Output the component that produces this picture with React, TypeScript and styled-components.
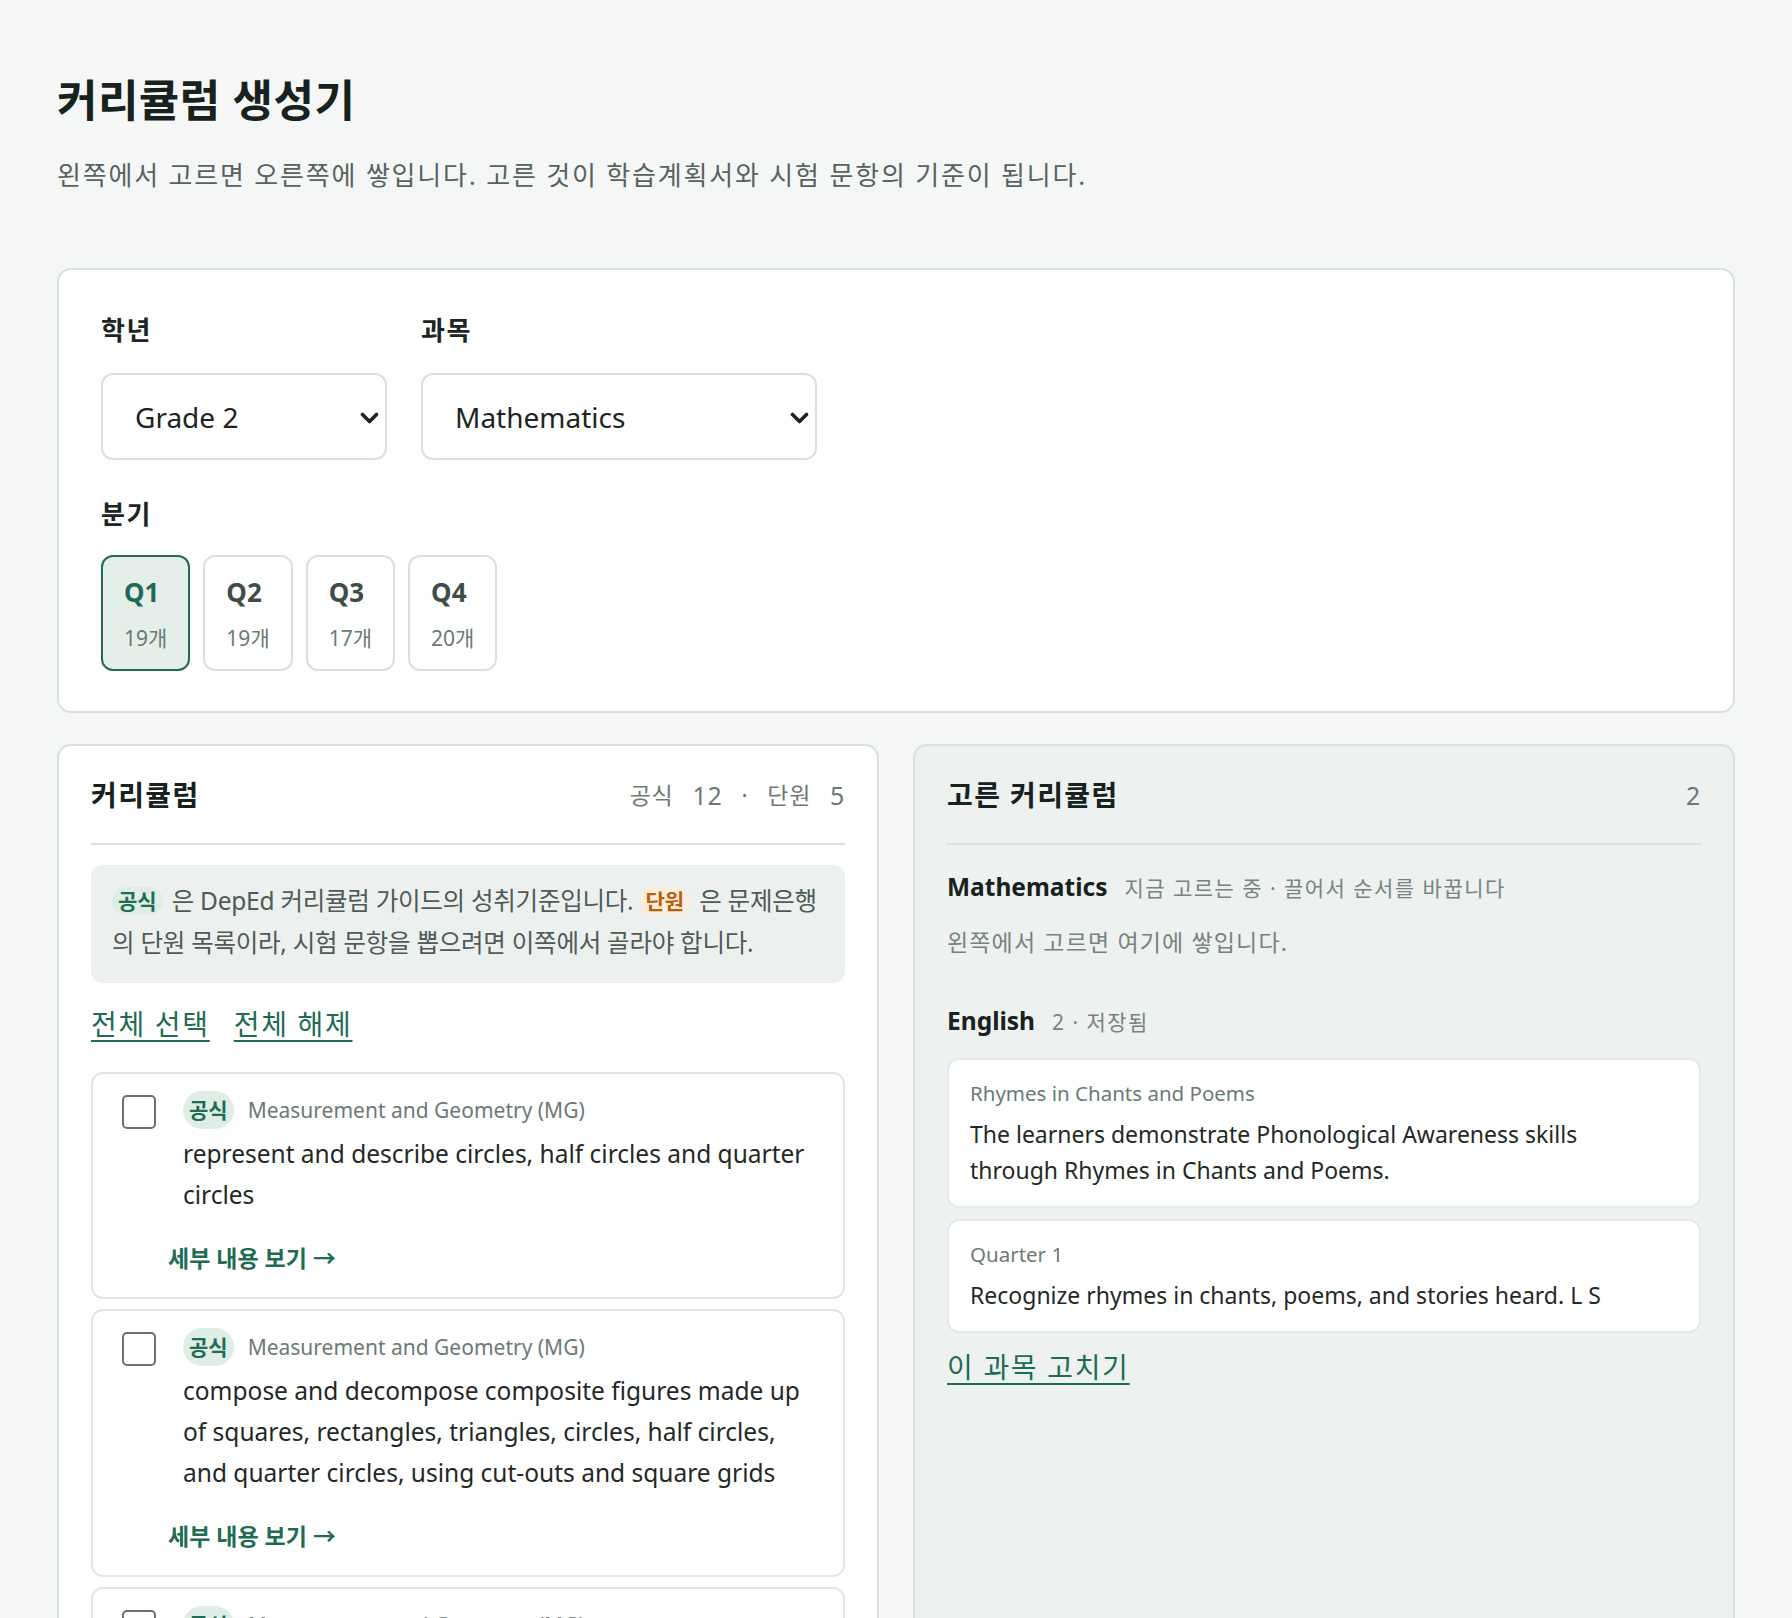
import styled, { createGlobalStyle } from "styled-components";

const GlobalStyle = createGlobalStyle`
    body {
        margin: 0;
        background: #f5f7f6;
        font-family: "Noto Sans", "Noto Sans CJK KR", sans-serif;
        color: #1b2521;
    }
    * {
        box-sizing: border-box;
    }
`

const Page = styled.main`
    padding: 74px 57px 0;
`

const Title = styled.h1`
    margin: 0;
    font-size: 44px;
    line-height: 52px;
    font-weight: 700;
    letter-spacing: 0.01em;
    color: #17211d;
`

const Subtitle = styled.p`
    margin: 30px 0 0;
    font-size: 26px;
    line-height: 39px;
    letter-spacing: 0.07em;
    color: #56635e;
`

const Panel = styled.section`
    margin-top: 73px;
    background: #fff;
    border: 2px solid #d8e1dd;
    border-radius: 14px;
    padding: 43px 42px 40px;
`

const FieldRow = styled.div`
    display: flex;
    gap: 34px;
`

const Field = styled.div`
    display: flex;
    flex-direction: column;
    gap: 26px;
`

const Label = styled.div`
    font-size: 26px;
    line-height: 34px;
    font-weight: 600;
    letter-spacing: 0.06em;
    color: #1b2521;
`

const SelectWrap = styled.div<{ $width: number }>`
    position: relative;
    width: ${p => p.$width}px;
`

const Select = styled.select`
    appearance: none;
    width: 100%;
    height: 87px;
    padding: 0 50px 0 32px;
    border: 2px solid #d8e1dd;
    border-radius: 12px;
    background: #fff;
    font-family: inherit;
    font-size: 28px;
    color: #1b2521;
    outline: none;
`

const Chevron = styled.svg`
    position: absolute;
    right: 8px;
    top: 50%;
    width: 19px;
    height: 12px;
    margin-top: -5px;
    pointer-events: none;
`

const QuarterBlock = styled.div`
    margin-top: 37px;
    display: flex;
    flex-direction: column;
    gap: 24px;
`

const QuarterRow = styled.div`
    display: flex;
    gap: 13px;
`

const QuarterButton = styled.button<{ $active?: boolean }>`
    display: flex;
    flex-direction: column;
    align-items: flex-start;
    gap: 16px;
    padding: 19px 21px 17px;
    border: 2px solid ${p => (p.$active ? "#216b55" : "#d8e1dd")};
    border-radius: 12px;
    background: ${p => (p.$active ? "#e4efea" : "#fff")};
    font-family: inherit;
    cursor: pointer;
`

const QuarterName = styled.span<{ $active?: boolean }>`
    font-size: 26px;
    line-height: 32px;
    font-weight: 700;
    color: ${p => (p.$active ? "#1f6b55" : "#3f4d48")};
`

const QuarterCount = styled.span`
    font-size: 21px;
    line-height: 28px;
    color: #6b7a75;
`

const Columns = styled.div`
    margin-top: 31px;
    display: grid;
    grid-template-columns: 1fr 1fr;
    gap: 34px;
    align-items: stretch;
`

const Column = styled.section<{ $tinted?: boolean }>`
    background: ${p => (p.$tinted ? "#edf1f0" : "#fff")};
    border: 2px solid #d8e1dd;
    border-radius: 14px;
    padding: 31px 32px 40px;
`

const ColumnHeader = styled.div`
    display: flex;
    justify-content: space-between;
    align-items: center;
    padding-bottom: 30px;
    border-bottom: 2px solid #dbe3df;
`

const ColumnTitle = styled.h2`
    margin: 0;
    font-size: 28px;
    line-height: 36px;
    font-weight: 700;
    letter-spacing: 0.05em;
    color: #17211d;
`

const Meta = styled.div`
    display: flex;
    align-items: center;
    gap: 19px;
    font-size: 23px;
    line-height: 34px;
    letter-spacing: 0.03em;
    color: #6b7a75;
`

const Number = styled.span`
    font-size: 25px;
`

const InfoBox = styled.div`
    margin-top: 20px;
    background: #ecf1ef;
    border-radius: 12px;
    padding: 15px 21px 19px;
    font-size: 24.5px;
    line-height: 42px;
    letter-spacing: -0.01em;
    color: #4e5b56;
`

const Chip = styled.span<{ $tone?: "green" | "orange" }>`
    display: inline-block;
    padding: 6px 6px;
    border-radius: 19px;
    font-size: 21px;
    line-height: 26px;
    font-weight: 700;
    letter-spacing: 0;
    vertical-align: middle;
    background: ${p => (p.$tone === "orange" ? "#fcecdc" : "#deede6")};
    color: ${p => (p.$tone === "orange" ? "#b7600f" : "#1f6b55")};
`

const InlineChip = styled(Chip)`
    padding: 1px 6px;
    margin-right: 9px;
    position: relative;
    top: -2px;
`

const LinkRow = styled.div`
    margin-top: 22px;
    display: flex;
    gap: 24px;
`

const TextLink = styled.a`
    font-size: 28px;
    line-height: 39px;
    letter-spacing: 0.06em;
    color: #1f6b55;
    text-decoration: underline;
    text-underline-offset: 5px;
    text-decoration-thickness: 2px;
    cursor: pointer;
`

const ItemList = styled.div`
    margin-top: 28px;
    display: flex;
    flex-direction: column;
    gap: 10px;
`

const ItemCard = styled.div`
    display: grid;
    grid-template-columns: 34px 1fr;
    column-gap: 27px;
    padding: 17px 28px 23px 29px;
    border: 2px solid #e0e7e4;
    border-radius: 12px;
    background: #fff;
`

const Checkbox = styled.input`
    appearance: none;
    width: 34px;
    height: 34px;
    margin: 4px 0 0;
    border: 2px solid #6f6f6f;
    border-radius: 5px;
    background: #fff;
`

const ItemBody = styled.div`
    display: flex;
    flex-direction: column;
    align-items: flex-start;
`

const ItemHead = styled.div`
    display: flex;
    align-items: center;
    gap: 14px;
    height: 38px;
`

const Category = styled.span`
    font-size: 21px;
    line-height: 29px;
    color: #6b7a75;
`

const ItemText = styled.p`
    margin: 4px 0 0;
    font-size: 24.5px;
    line-height: 41px;
    color: #1f2925;
`

const DetailLink = styled.a`
    margin: 27px 0 0 -15px;
    font-size: 23px;
    line-height: 32px;
    font-weight: 600;
    color: #1f6b55;
    text-decoration: none;
    cursor: pointer;
`

const SubjectLine = styled.div<{ $gap: number }>`
    margin-top: ${p => p.$gap}px;
    display: flex;
    align-items: baseline;
    gap: 17px;
`

const SubjectName = styled.span`
    font-size: 24.5px;
    line-height: 34px;
    font-weight: 700;
    color: #17211d;
`

const SubjectNote = styled.span`
    font-size: 21px;
    line-height: 34px;
    letter-spacing: 0.07em;
    color: #76847f;
`

const Hint = styled.p`
    margin: 20px 0 0;
    font-size: 23px;
    line-height: 34px;
    letter-spacing: 0.05em;
    color: #76847f;
`

const SavedList = styled.div`
    margin-top: 19px;
    display: flex;
    flex-direction: column;
    gap: 11px;
`

const SavedCard = styled.div`
    background: #fff;
    border: 2px solid #e4eae7;
    border-radius: 12px;
    padding: 19px 40px 18px 21px;
`

const SavedLabel = styled.div`
    font-size: 20.5px;
    line-height: 29px;
    color: #6b7a75;
`

const SavedText = styled.div`
    margin-top: 8px;
    font-size: 23px;
    line-height: 36px;
    color: #1f2925;
`

const EditLink = styled(TextLink)`
    display: inline-block;
    margin-top: 15px;
`

const ChevronIcon = () => (
    <Chevron viewBox="0 0 19 12">
        <path d="M2.5 2.5 L9.5 9.5 L16.5 2.5" fill="none" stroke="#1b2521" strokeWidth="3.6" strokeLinecap="round" strokeLinejoin="round" />
    </Chevron>
)

const quarters = [
    { name: "Q1", count: 19 },
    { name: "Q2", count: 19 },
    { name: "Q3", count: 17 },
    { name: "Q4", count: 20 },
]

const items = [
    "represent and describe circles, half circles and quarter circles",
    "compose and decompose composite figures made up of squares, rectangles, triangles, circles, half circles, and quarter circles, using cut-outs and square grids",
    "identify and draw lines of symmetry in shapes and figures",
]

const saved = [
    { label: "Rhymes in Chants and Poems", text: "The learners demonstrate Phonological Awareness skills through Rhymes in Chants and Poems." },
    { label: "Quarter 1", text: "Recognize rhymes in chants, poems, and stories heard. L S" },
]

const App = () => {
    return (
        <>
            <GlobalStyle />
            <Page>
                <Title>커리큘럼 생성기</Title>
                <Subtitle>왼쪽에서 고르면 오른쪽에 쌓입니다. 고른 것이 학습계획서와 시험 문항의 기준이 됩니다.</Subtitle>

                <Panel>
                    <FieldRow>
                        <Field>
                            <Label>학년</Label>
                            <SelectWrap $width={286}>
                                <Select defaultValue="2">
                                    <option value="1">Grade 1</option>
                                    <option value="2">Grade 2</option>
                                    <option value="3">Grade 3</option>
                                </Select>
                                <ChevronIcon />
                            </SelectWrap>
                        </Field>
                        <Field>
                            <Label>과목</Label>
                            <SelectWrap $width={396}>
                                <Select defaultValue="math">
                                    <option value="math">Mathematics</option>
                                    <option value="eng">English</option>
                                </Select>
                                <ChevronIcon />
                            </SelectWrap>
                        </Field>
                    </FieldRow>
                    <QuarterBlock>
                        <Label>분기</Label>
                        <QuarterRow>
                            {quarters.map((q, i) => (
                                <QuarterButton key={q.name} $active={i === 0}>
                                    <QuarterName $active={i === 0}>{q.name}</QuarterName>
                                    <QuarterCount>{q.count}개</QuarterCount>
                                </QuarterButton>
                            ))}
                        </QuarterRow>
                    </QuarterBlock>
                </Panel>

                <Columns>
                    <Column>
                        <ColumnHeader>
                            <ColumnTitle>커리큘럼</ColumnTitle>
                            <Meta>
                                <span>공식</span>
                                <Number>12</Number>
                                <span>·</span>
                                <span>단원</span>
                                <Number>5</Number>
                            </Meta>
                        </ColumnHeader>
                        <InfoBox>
                            <InlineChip>공식</InlineChip>은 DepEd 커리큘럼 가이드의 성취기준입니다. <InlineChip $tone="orange">단원</InlineChip>은 문제은행의 단원 목록이라, 시험 문항을 뽑으려면 이쪽에서 골라야 합니다.
                        </InfoBox>
                        <LinkRow>
                            <TextLink>전체 선택</TextLink>
                            <TextLink>전체 해제</TextLink>
                        </LinkRow>
                        <ItemList>
                            {items.map(text => (
                                <ItemCard key={text}>
                                    <Checkbox type="checkbox" />
                                    <ItemBody>
                                        <ItemHead>
                                            <Chip>공식</Chip>
                                            <Category>Measurement and Geometry (MG)</Category>
                                        </ItemHead>
                                        <ItemText>{text}</ItemText>
                                        <DetailLink>세부 내용 보기 →</DetailLink>
                                    </ItemBody>
                                </ItemCard>
                            ))}
                        </ItemList>
                    </Column>

                    <Column $tinted>
                        <ColumnHeader>
                            <ColumnTitle>고른 커리큘럼</ColumnTitle>
                            <Meta><Number>2</Number></Meta>
                        </ColumnHeader>
                        <SubjectLine $gap={25}>
                            <SubjectName>Mathematics</SubjectName>
                            <SubjectNote>지금 고르는 중 · 끌어서 순서를 바꿉니다</SubjectNote>
                        </SubjectLine>
                        <Hint>왼쪽에서 고르면 여기에 쌓입니다.</Hint>
                        <SubjectLine $gap={45}>
                            <SubjectName>English</SubjectName>
                            <SubjectNote>2 · 저장됨</SubjectNote>
                        </SubjectLine>
                        <SavedList>
                            {saved.map(s => (
                                <SavedCard key={s.label}>
                                    <SavedLabel>{s.label}</SavedLabel>
                                    <SavedText>{s.text}</SavedText>
                                </SavedCard>
                            ))}
                        </SavedList>
                        <EditLink>이 과목 고치기</EditLink>
                    </Column>
                </Columns>
            </Page>
        </>
    );
}

export default App;
